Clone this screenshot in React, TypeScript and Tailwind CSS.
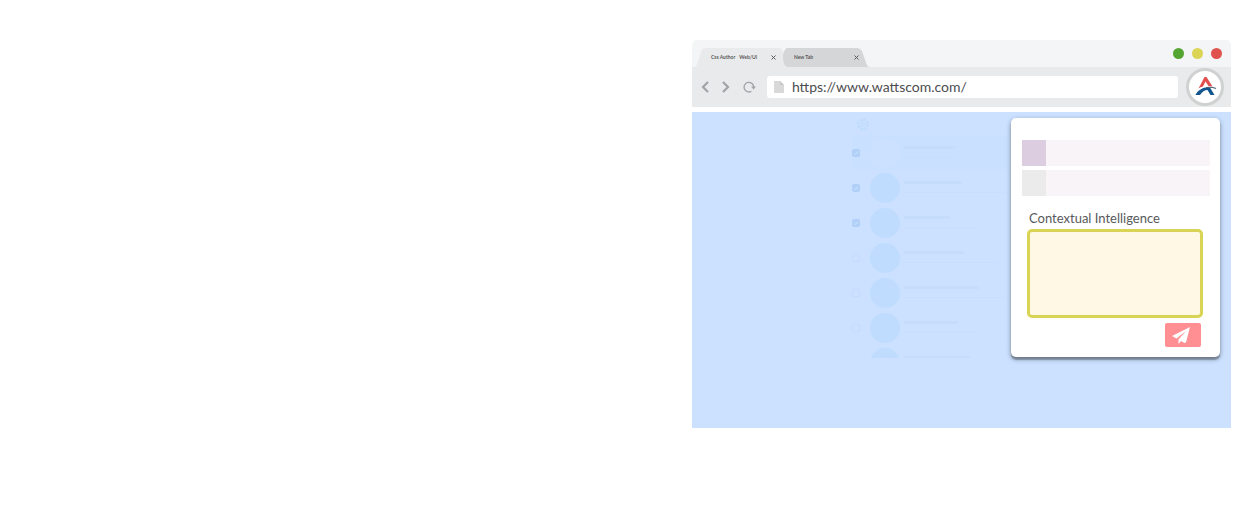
import { clsx } from "clsx";

const CONTACTS = [
  { checked: true, avatar: false, name: "w-[52px]", detail: "w-[52px]" },
  { checked: true, avatar: true, name: "w-[58px]", detail: "w-[101px]" },
  { checked: true, avatar: true, name: "w-[46px]", detail: "w-[74px]" },
  { checked: false, avatar: true, name: "w-[60px]", detail: "w-[95px]" },
  { checked: false, avatar: true, name: "w-[75px]", detail: "w-[101px]" },
  { checked: false, avatar: true, name: "w-[54px]", detail: "w-[74px]" },
  { checked: false, avatar: true, name: "w-[66px]", detail: "w-[90px]" },
];

const FIELDS = [
  { label: "First field", swatch: "bg-[#dccde1]" },
  { label: "Second field", swatch: "bg-[#ebebeb]" },
];

function Tab({ title, active }: { title: string[]; active?: boolean }) {
  return (
    <button
      type="button"
      className={clsx(
        "relative flex h-[19px] items-center justify-between text-[5px] font-bold leading-none text-[#5a5a5c]",
        active ? "w-[91px] pl-4 pr-[10px]" : "-ml-[3px] w-[87px] pl-[11px] pr-[11px]",
      )}
    >
      <svg
        className={clsx("absolute inset-0 h-full w-full", active ? "text-[#e9eaeb]" : "text-[#d5d6d7]")}
        viewBox="0 0 91 19"
        preserveAspectRatio="none"
        aria-hidden="true"
      >
        {active ? (
          <path fill="currentColor" d="M0 19C3 18 5 3 8 1Q9 0 11 0H84Q87 0 88 4L91 19Z" />
        ) : (
          <path fill="currentColor" d="M4 0H77Q81 0 83 4L87 15Q88 19 91 19H5C2 19 0 14 0 9C0 5 2 1 4 0Z" />
        )}
      </svg>
      <span className="relative flex gap-1 whitespace-nowrap">
        {title.map((part) => (
          <span key={part}>{part}</span>
        ))}
      </span>
      <svg className="relative h-[5px] w-[5px]" viewBox="0 0 5 5" stroke="#5a5a5c" aria-hidden="true">
        <path d="M0.5 0.5L4.5 4.5M4.5 0.5L0.5 4.5" />
      </svg>
    </button>
  );
}

function Brand() {
  return (
    <div className="flex h-[38px] w-[38px] shrink-0 items-center justify-center rounded-full border-[3px] border-[#d0d1d1] bg-white">
      <svg className="h-[22px] w-[24px]" viewBox="0 0 24 22" role="img" aria-label="Wattscom">
        <path fill="#e0504f" d="M5.5 12.5L11.5 1H13.5L19.5 10.5L15.5 10L12.5 5.5L10 10.5Q7.5 11 5.5 12.5Z" />
        <path fill="#12568d" d="M2.5 19C5 14 11 10.5 17 11.5L21.5 19H17.5L14.5 14C11.5 14 9.5 15.5 7 19Z" />
        <path fill="none" stroke="#4d6073" strokeWidth="1.2" d="M13 11.7Q18 10.5 23 12.5" />
      </svg>
    </div>
  );
}

function Toolbar() {
  return (
    <div className="flex h-10 items-center bg-[#e9eaeb] pl-[9px] pr-[7px] text-[#a0a4a8]">
      <button type="button" aria-label="Back" className="w-[21px]">
        <svg className="h-3 w-2" viewBox="0 0 8 12" fill="none" stroke="currentColor" strokeWidth="2.2">
          <path d="M7 1L2 6L7 11" />
        </svg>
      </button>
      <button type="button" aria-label="Forward" className="w-[21px]">
        <svg className="h-3 w-2" viewBox="0 0 8 12" fill="none" stroke="currentColor" strokeWidth="2.2">
          <path d="M1 1L6 6L1 11" />
        </svg>
      </button>
      <button type="button" aria-label="Reload" className="w-6">
        <svg className="h-3 w-[13px]" viewBox="0 0 13 12" fill="none" stroke="currentColor" strokeWidth="1.3">
          <path d="M8.5 10.2A4.8 4.8 0 1 1 10.7 6" />
          <path fill="currentColor" stroke="none" d="M8 5.5H13L10.5 8.5Z" />
        </svg>
      </button>
      <div className="flex h-[22px] min-w-0 flex-1 items-center gap-2 rounded-[3px] bg-white pl-[7px]">
        <svg className="h-3 w-[10px] shrink-0" viewBox="0 0 10 12" aria-hidden="true">
          <path fill="#d9d9d9" d="M0 0H6L10 4V12H0Z" />
          <path fill="#c8c8c8" d="M6 0L10 4H6Z" />
        </svg>
        <input
          type="text"
          aria-label="Address"
          defaultValue="https://www.wattscom.com/"
          className="min-w-0 flex-1 bg-transparent text-sm text-[#4d4d4f] outline-none"
        />
      </div>
      <div className="ml-2">
        <Brand />
      </div>
    </div>
  );
}

function ContactList() {
  return (
    <div className="h-[240px] w-[159px] overflow-hidden">
      <div className="flex h-[17px] pl-1">
        <svg className="h-[13px] w-[14px]" viewBox="0 0 14 14" fill="none" stroke="#bcdafa" aria-hidden="true">
          <circle cx="7" cy="7" r="1.8" />
          <circle cx="7" cy="7" r="4.5" />
          <circle cx="7" cy="7" r="5.8" strokeWidth="1.4" strokeDasharray="2.2 2.35" />
        </svg>
      </div>
      {CONTACTS.map((contact, i) => (
        <div key={i} className={clsx("flex h-[35px] items-center", i === 0 && "bg-[#c9e0fe]")}>
          <label className="relative flex h-2 w-2 shrink-0">
            <input
              type="checkbox"
              aria-label={`Contact ${i + 1}`}
              defaultChecked={contact.checked}
              className="h-2 w-2 appearance-none rounded-[2px] border border-[#c4dcfb] checked:border-[#b0d0f8] checked:bg-[#b0d0f8]"
            />
            {contact.checked && (
              <svg className="absolute inset-0 h-2 w-2" viewBox="0 0 8 8" fill="none" stroke="#cbe2ff">
                <path d="M2 4.2L3.4 5.6L6 2.4" />
              </svg>
            )}
          </label>
          <div className={clsx("ml-[10px] h-[30px] w-[30px] shrink-0 rounded-full", contact.avatar ? "bg-[#bfdcff]" : "bg-[#cbe1ff]")} />
          <div className="ml-1 flex flex-col gap-2 pb-[2px]">
            <div className={clsx("h-[3px] bg-[#c5ddfb]", contact.name)} />
            <div className={clsx("h-px bg-[#c7dffd]", contact.detail)} />
          </div>
        </div>
      ))}
    </div>
  );
}

function ContextPanel() {
  return (
    <form
      className="flex w-[209px] flex-col rounded-[5px] bg-white px-[11px] pb-[10px] pt-[22px] shadow-[0_3px_1px_rgba(0,0,0,0.22),0_2px_5px_rgba(0,0,0,0.4)]"
      onSubmit={(e) => e.preventDefault()}
    >
      <div className="-mr-px flex flex-col gap-1">
        {FIELDS.map((field) => (
          <label key={field.label} className="flex h-[26px] bg-[#f8f4f8]">
            <span className={clsx("w-6 shrink-0", field.swatch)} />
            <input type="text" aria-label={field.label} className="min-w-0 flex-1 bg-transparent outline-none" />
          </label>
        ))}
      </div>
      <label htmlFor="context" className="ml-[7px] mt-3 text-[13px] leading-5 text-[#58595b]">
        Contextual Intelligence
      </label>
      <textarea
        id="context"
        className="ml-[5px] mr-[6px] mt-px h-[89px] resize-none rounded-[5px] border-[3px] border-[#d9d455] bg-[#fff8e5] outline-none"
      />
      <button
        type="submit"
        aria-label="Send"
        className="mr-2 mt-[5px] flex h-6 w-9 items-center self-end rounded-[2px] bg-[#ff8f93] pl-[7px]"
      >
        <svg className="h-[17px] w-[18px]" viewBox="0 0 18 17" fill="white" aria-hidden="true">
          <path d="M18 0L0 9L4.5 11.5L14 4L6.5 12.5V17L9 14L12.5 16L14 15.5Z" />
        </svg>
      </button>
    </form>
  );
}

export default function App() {
  return (
    <main className="bg-white pb-24 pt-10 font-['Lato',sans-serif]">
      <div className="ml-[55%] mr-[27px]">
        {/* Tab strip */}
        <div className="flex h-[27px] items-end rounded-t-[5px] bg-[#f4f5f6] pl-[3px] pr-[9px]">
          <Tab title={["Css Author", "Web/Ui"]} active />
          <Tab title={["New Tab"]} />
          <div className="mb-2 ml-auto flex gap-2">
            <span className="h-[11px] w-[11px] rounded-full bg-[#55a532]" />
            <span className="h-[11px] w-[11px] rounded-full bg-[#dbd455]" />
            <span className="h-[11px] w-[11px] rounded-full bg-[#e0524d]" />
          </div>
        </div>
        <Toolbar />
        {/* Page */}
        <div className="mt-[5px] flex items-start justify-end bg-[#cbe1ff] pb-[70px] pr-[11px] pt-[6px]">
          <ContactList />
          <ContextPanel />
        </div>
      </div>
    </main>
  );
}
